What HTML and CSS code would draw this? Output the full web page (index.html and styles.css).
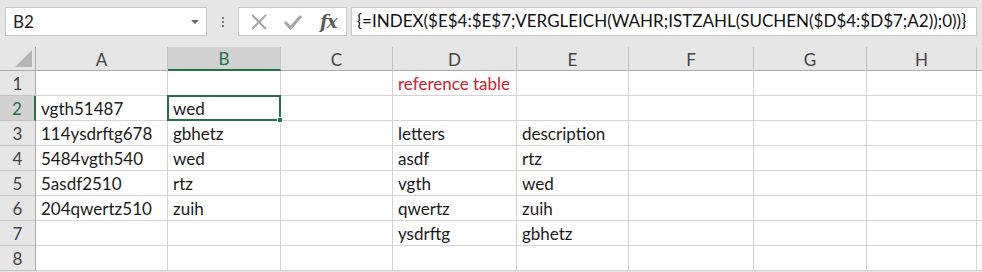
FILE: index.html
```html
<!DOCTYPE html>
<html>
<head>
<meta charset="utf-8">
<link rel="stylesheet" href="styles.css">
</head>
<body>
<div class="app">
  <div class="toolbar">
    <div class="namebox"><span class="name">B2</span><span class="caret"></span></div>
    <div class="grip"><i></i><i></i><i></i></div>
    <div class="fxbox">
      <svg class="ico" width="18" height="18" viewBox="0 0 18 18"><path d="M2 2 L16 16 M16 2 L2 16" stroke="#a6a6a6" stroke-width="2" fill="none"/></svg>
      <svg class="ico" width="20" height="18" viewBox="0 0 20 18"><path d="M2 9 L7.5 15 L18 3" stroke="#a6a6a6" stroke-width="3" fill="none"/></svg>
      <span class="fx">fx</span>
    </div>
    <div class="formula">{=INDEX($E$4:$E$7;VERGLEICH(WAHR;ISTZAHL(SUCHEN($D$4:$D$7;A2));0))}</div>
  </div>
  <div class="sheet">
    <div class="corner"><span class="tri"></span></div>
    <div class="ch">A</div>
    <div class="ch selc">B</div>
    <div class="ch">C</div>
    <div class="ch">D</div>
    <div class="ch">E</div>
    <div class="ch">F</div>
    <div class="ch">G</div>
    <div class="ch">H</div>
    <div class="ch last"></div>

    <div class="rh">1</div><div class="c"></div><div class="c"></div><div class="c"></div><div class="c red">reference table</div><div class="c"></div><div class="c"></div><div class="c"></div><div class="c"></div><div class="c last"></div>
    <div class="rh selr">2</div><div class="c">vgth51487</div><div class="c sel">wed<span class="selbox"><span class="handle"></span></span></div><div class="c"></div><div class="c"></div><div class="c"></div><div class="c"></div><div class="c"></div><div class="c"></div><div class="c last"></div>
    <div class="rh">3</div><div class="c">114ysdrftg678</div><div class="c">gbhetz</div><div class="c"></div><div class="c">letters</div><div class="c">description</div><div class="c"></div><div class="c"></div><div class="c"></div><div class="c last"></div>
    <div class="rh">4</div><div class="c">5484vgth540</div><div class="c">wed</div><div class="c"></div><div class="c">asdf</div><div class="c">rtz</div><div class="c"></div><div class="c"></div><div class="c"></div><div class="c last"></div>
    <div class="rh">5</div><div class="c">5asdf2510</div><div class="c">rtz</div><div class="c"></div><div class="c">vgth</div><div class="c">wed</div><div class="c"></div><div class="c"></div><div class="c"></div><div class="c last"></div>
    <div class="rh">6</div><div class="c">204qwertz510</div><div class="c">zuih</div><div class="c"></div><div class="c">qwertz</div><div class="c">zuih</div><div class="c"></div><div class="c"></div><div class="c"></div><div class="c last"></div>
    <div class="rh">7</div><div class="c"></div><div class="c"></div><div class="c"></div><div class="c">ysdrftg</div><div class="c">gbhetz</div><div class="c"></div><div class="c"></div><div class="c"></div><div class="c last"></div>
    <div class="rh">8</div><div class="c"></div><div class="c"></div><div class="c"></div><div class="c"></div><div class="c"></div><div class="c"></div><div class="c"></div><div class="c"></div><div class="c last"></div>
  </div>
</div>
</body>
</html>
```
FILE: styles.css
```css
* { box-sizing: border-box; }
html, body { margin: 0; padding: 0; }
body {
  width: 982px;
  height: 272px;
  overflow: hidden;
  background: #e6e6e6;
  font-family: Lato, "Open Sans", sans-serif;
  font-size: 17px;
  color: #1a1a1a;
}
.toolbar {
  height: 47px;
  display: flex;
  align-items: flex-start;
  padding: 7px 0 0 5px;
}
.namebox {
  width: 202px;
  height: 29px;
  background: #fff;
  border: 1px solid #c6c6c6;
  display: flex;
  align-items: center;
  justify-content: space-between;
  padding: 0 7px 0 7px;
}
.name { font-size: 17px; color: #222; }
.caret {
  width: 0; height: 0;
  border-left: 4px solid transparent;
  border-right: 4px solid transparent;
  border-top: 4px solid #666;
}
.grip {
  width: 31px;
  height: 29px;
  display: flex;
  flex-direction: column;
  align-items: center;
  justify-content: center;
  gap: 2px;
}
.grip i { display: block; width: 2px; height: 2px; background: #7a7a7a; }
.fxbox {
  width: 109px;
  height: 29px;
  background: #fff;
  border: 1px solid #c6c6c6;
  display: flex;
  align-items: center;
  padding: 0 0 0 11px;
  gap: 15px;
}
.ico { display: block; }
.fx {
  font-family: "DejaVu Serif", "Liberation Serif", serif;
  font-style: italic;
  font-weight: bold;
  font-size: 18px;
  color: #5a5a5a;
  margin-left: 2px;
  letter-spacing: -1px;
}
.formula {
  margin-left: 4px;
  width: 626px;
  height: 29px;
  background: #fff;
  border: 1px solid #c6c6c6;
  padding: 2px 0 0 5px;
  font-size: 17px;
  color: #111;
  white-space: nowrap;
  overflow: hidden;
}
.sheet {
  display: grid;
  grid-template-columns: 36px 132px 113px 112px 124px 112px 125px 113px 110px 1fr;
  grid-template-rows: 24px repeat(8, 25px);
  background: #fff;
}
.corner {
  background: #e6e6e6;
  border-right: 1px solid #ababab;
  border-bottom: 1px solid #ababab;
  position: relative;
}
.tri {
  position: absolute;
  right: 3px;
  bottom: 3px;
  width: 0; height: 0;
  border-left: 17px solid transparent;
  border-bottom: 17px solid #b5b5b5;
}
.ch {
  background: #e6e6e6;
  border-right: 1px solid #c4c4c4;
  border-bottom: 1px solid #ababab;
  display: flex;
  align-items: center;
  justify-content: center;
  color: #444;
  font-size: 17px;
  padding-top: 1px;
}
.ch.selc {
  background: #d2d2d2;
  color: #217346;
  border-bottom: 2px solid #217346;
}
.ch.last { border-right: none; }
.rh {
  background: #e6e6e6;
  border-right: 1px solid #ababab;
  border-bottom: 1px solid #c4c4c4;
  display: flex;
  align-items: center;
  justify-content: center;
  color: #444;
  font-size: 17px;
}
.rh.selr {
  background: #d2d2d2;
  color: #217346;
  border-right: 2px solid #217346;
}
.c {
  border-right: 1px solid #d4d4d4;
  border-bottom: 1px solid #d4d4d4;
  display: flex;
  align-items: flex-end;
  padding: 0 0 1px 5px;
  white-space: nowrap;
  font-size: 17px;
  color: #1a1a1a;
}
.c.last { border-right: none; }
.red { color: #d2202a; }
.sel { position: relative; }
.selbox {
  position: absolute;
  left: -1px;
  top: -1px;
  right: -1px;
  bottom: -1px;
  border: 2px solid #217346;
}
.handle {
  position: absolute;
  right: -4px;
  bottom: -4px;
  width: 6px;
  height: 6px;
  background: #217346;
  border: 1px solid #fff;
}
```
